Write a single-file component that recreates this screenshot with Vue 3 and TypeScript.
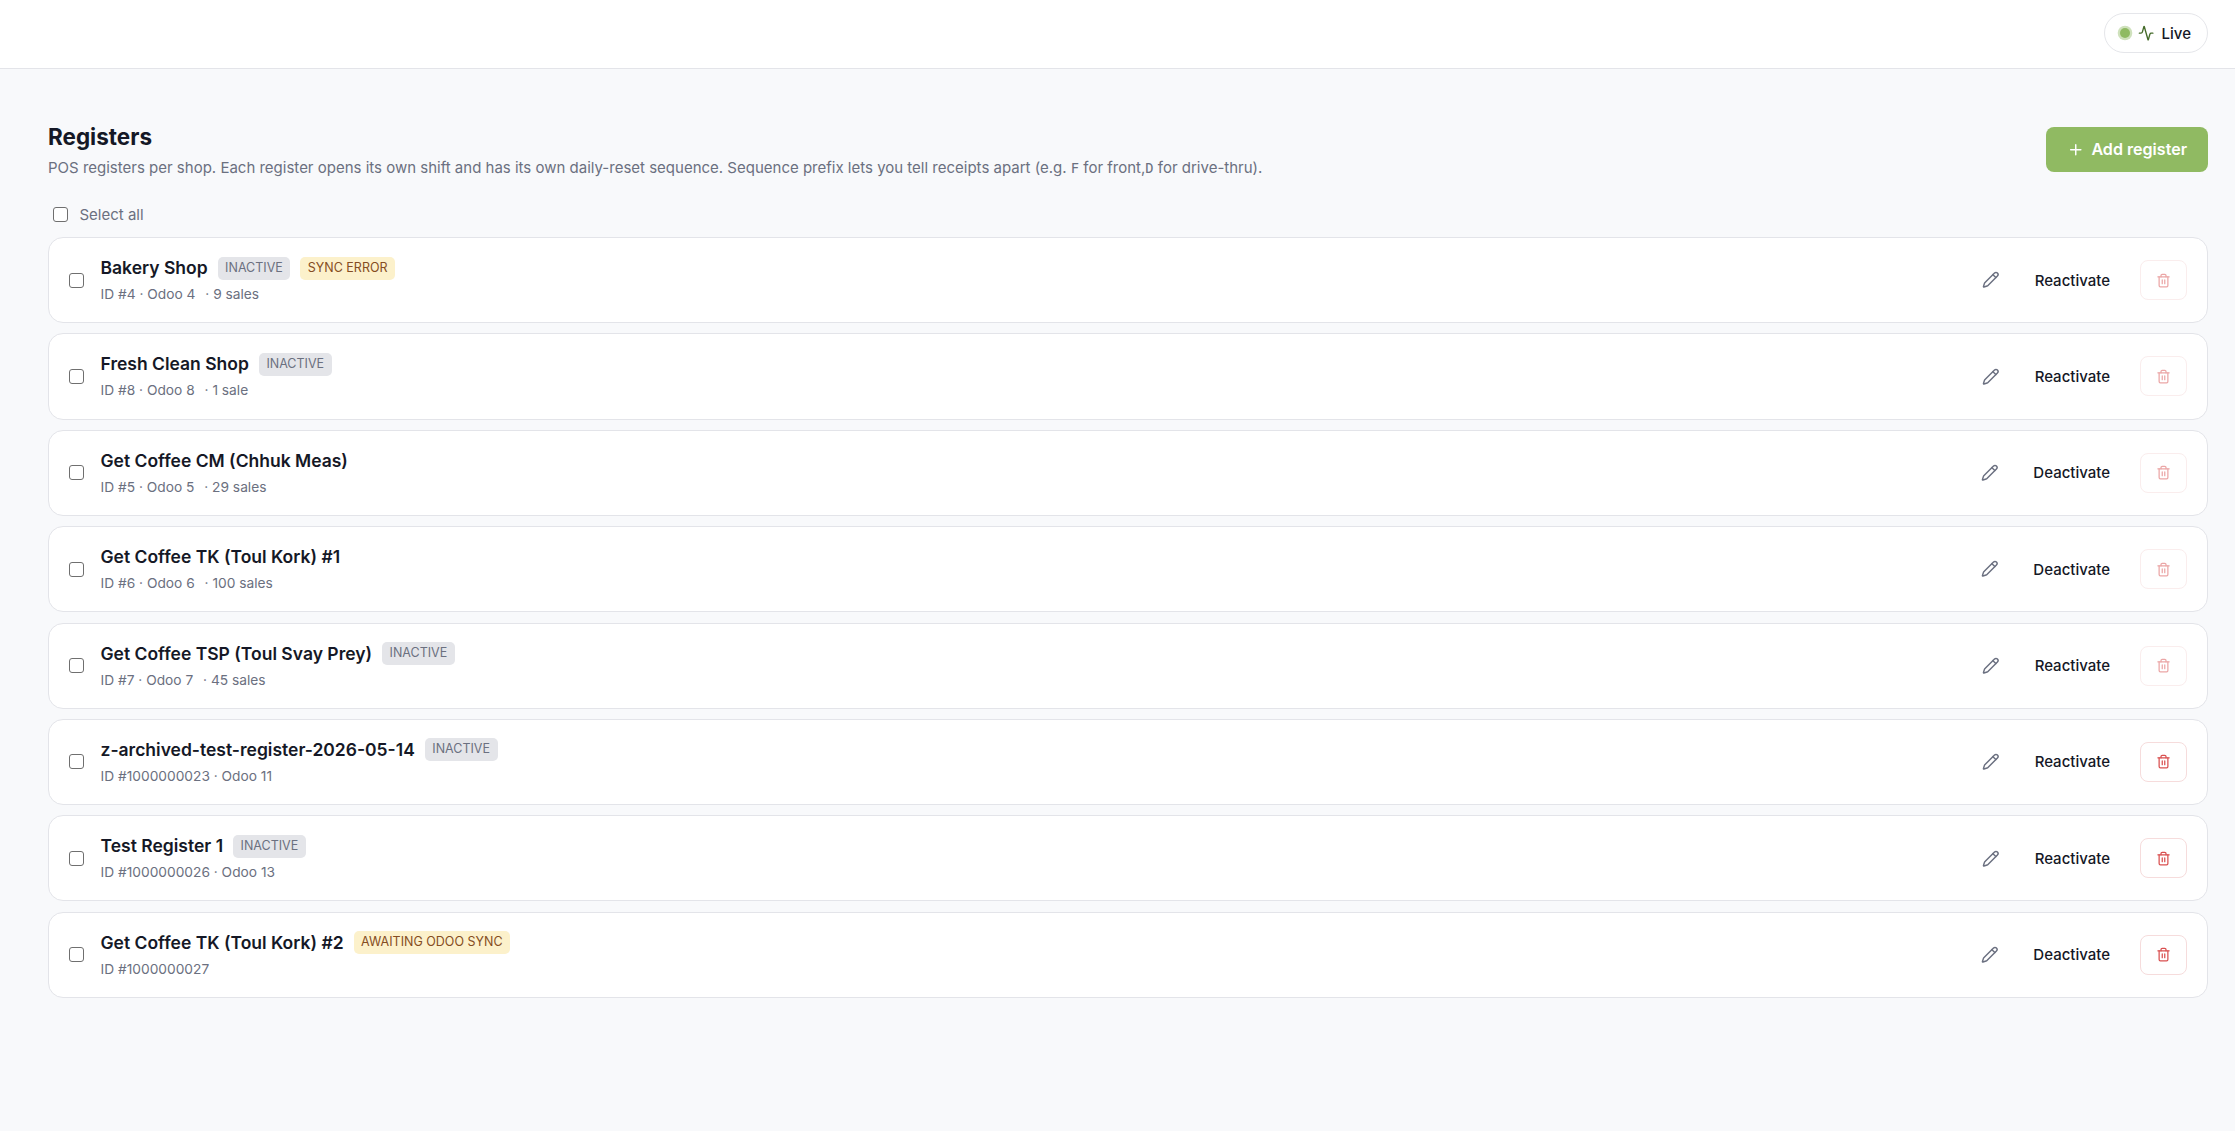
<script setup lang="ts">
interface Badge {
  label: string
  tone: 'muted' | 'warn'
}

interface Register {
  id: number
  name: string
  odoo?: number
  sales?: number
  active: boolean
  badges: Badge[]
}

const inactive: Badge = { label: 'INACTIVE', tone: 'muted' }

const registers: Register[] = [
  { id: 4, name: 'Bakery Shop', odoo: 4, sales: 9, active: false, badges: [inactive, { label: 'SYNC ERROR', tone: 'warn' }] },
  { id: 8, name: 'Fresh Clean Shop', odoo: 8, sales: 1, active: false, badges: [inactive] },
  { id: 5, name: 'Get Coffee CM (Chhuk Meas)', odoo: 5, sales: 29, active: true, badges: [] },
  { id: 6, name: 'Get Coffee TK (Toul Kork) #1', odoo: 6, sales: 100, active: true, badges: [] },
  { id: 7, name: 'Get Coffee TSP (Toul Svay Prey)', odoo: 7, sales: 45, active: false, badges: [inactive] },
  { id: 1000000023, name: 'z-archived-test-register-2026-05-14', odoo: 11, active: false, badges: [inactive] },
  { id: 1000000026, name: 'Test Register 1', odoo: 13, active: false, badges: [inactive] },
  { id: 1000000027, name: 'Get Coffee TK (Toul Kork) #2', active: true, badges: [{ label: 'AWAITING ODOO SYNC', tone: 'warn' }] },
]

const idLine = (r: Register): string => `ID #${r.id}` + (r.odoo ? ` · Odoo ${r.odoo}` : '')
const salesLine = (n: number): string => `· ${n} ${n === 1 ? 'sale' : 'sales'}`
</script>

<template>
  <div class="page">
    <header class="topbar">
      <div class="live">
        <span class="dot"></span>
        <svg class="icon activity" viewBox="0 0 24 24">
          <path d="M22 12h-2.48a2 2 0 0 0-1.93 1.46l-2.35 8.36a.25.25 0 0 1-.48 0L9.24 2.18a.25.25 0 0 0-.48 0l-2.35 8.36A2 2 0 0 1 4.49 12H2" />
        </svg>
        <span>Live</span>
      </div>
    </header>

    <main class="content">
      <div class="heading">
        <div>
          <h1>Registers</h1>
          <p>POS registers per shop. Each register opens its own shift and has its own daily-reset sequence. Sequence prefix lets you tell receipts apart (e.g. <code>F</code> for front,<code>D</code> for drive-thru).</p>
        </div>
        <button class="add" type="button">
          <svg class="icon plus" viewBox="0 0 24 24"><path d="M5 12h14M12 5v14" /></svg>
          <span>Add register</span>
        </button>
      </div>

      <label class="select-all">
        <input type="checkbox" />
        <span>Select all</span>
      </label>

      <ul class="list">
        <li v-for="r in registers" :key="r.id" class="card">
          <input type="checkbox" />
          <div class="info">
            <div class="title">
              <span class="name">{{ r.name }}</span>
              <span v-for="b in r.badges" :key="b.label" class="badge" :class="b.tone">{{ b.label }}</span>
            </div>
            <div class="meta">
              {{ idLine(r) }} <span v-if="r.sales" class="sales">{{ salesLine(r.sales) }}</span>
            </div>
          </div>
          <button class="edit" type="button" aria-label="Edit">
            <svg class="icon pencil" viewBox="0 0 24 24">
              <path d="M21.174 6.812a1 1 0 0 0-3.986-3.987L3.842 16.174a2 2 0 0 0-.5.83l-1.321 4.352a.5.5 0 0 0 .623.622l4.353-1.32a2 2 0 0 0 .83-.497z" />
              <path d="m15 5 4 4" />
            </svg>
          </button>
          <button class="toggle" type="button">{{ r.active ? 'Deactivate' : 'Reactivate' }}</button>
          <button class="delete" type="button" :disabled="!!r.sales" aria-label="Delete">
            <svg class="icon trash" viewBox="0 0 24 24">
              <path d="M3 6h18" />
              <path d="M19 6v14c0 1-1 2-2 2H7c-1 0-2-1-2-2V6" />
              <path d="M8 6V4c0-1 1-2 2-2h4c1 0 2 1 2 2v2" />
              <path d="M10 11v6M14 11v6" />
            </svg>
          </button>
        </li>
      </ul>
    </main>
  </div>
</template>

<style>
body {
  background: #f8f9fb;
}
</style>

<style scoped>
.page {
  min-height: 1131px;
  background: #f8f9fb;
  color: #151826;
  font-family: Inter, "Noto Sans", sans-serif;
  font-size: 15px;
}

.page,
.page * {
  box-sizing: border-box;
}

button {
  font: inherit;
  color: inherit;
  margin: 0;
  padding: 0;
  border: 0;
  background: none;
  display: flex;
  align-items: center;
  justify-content: center;
  flex: none;
}

.icon {
  display: block;
  flex: none;
  fill: none;
  stroke: currentColor;
  stroke-width: 2;
  stroke-linecap: round;
  stroke-linejoin: round;
}

.topbar {
  height: 69px;
  padding: 13px 27px 0 0;
  background: #fff;
  border-bottom: 1px solid #e3e4e9;
  display: flex;
  justify-content: flex-end;
  align-items: flex-start;
}

.live {
  height: 40px;
  padding: 0 16px 0 15px;
  border: 1px solid #e5e6ea;
  border-radius: 20px;
  display: flex;
  align-items: center;
  gap: 7.75px;
  font-weight: 500;
}

.dot {
  width: 10px;
  height: 10px;
  border-radius: 50%;
  background: #8fba62;
  box-shadow: 0 0 0 2.3px #cfe1bc;
}

.activity {
  width: 16.25px;
  height: 16.25px;
  color: #456b2a;
}

.content {
  padding: 51px 27px 0 48px;
}

.heading {
  height: 59px;
  display: flex;
  align-items: center;
  justify-content: space-between;
}

h1 {
  margin: 0 0 4px;
  font-size: 22.5px;
  font-weight: 700;
  line-height: 33px;
}

p {
  margin: 0;
  line-height: 22px;
  color: #6b7080;
}

code {
  font-family: "DejaVu Sans Mono", monospace;
  font-size: 13.75px;
}

.add {
  width: 162px;
  height: 45px;
  gap: 7px;
  border-radius: 8px;
  background: #90ba62;
  color: #fff;
  font-size: 16.1px;
  font-weight: 600;
}

.add span {
  line-height: 20px;
  padding-bottom: 1px;
}

.plus {
  width: 17.5px;
  height: 17.5px;
}

input {
  appearance: none;
  width: 15px;
  height: 15px;
  margin: 0;
  flex: none;
  border: 1px solid #6f6f6f;
  border-radius: 3px;
  background: #fff;
}

.select-all {
  margin-top: 24px;
  height: 23px;
  padding-left: 5px;
  display: flex;
  align-items: center;
  gap: 11.5px;
  color: #6b7080;
}

.list {
  list-style: none;
  margin: 11px 0 0;
  padding: 0;
  display: flex;
  flex-direction: column;
  gap: 10.2px;
}

.card {
  height: 86.2px;
  padding: 0 20px;
  border: 1px solid #e3e4e9;
  border-radius: 15px;
  background: #fff;
  display: flex;
  align-items: center;
}

.info {
  flex: 1;
  margin-left: 16.5px;
}

.title {
  height: 24px;
  margin-bottom: 4px;
  display: flex;
  align-items: center;
  gap: 10px;
}

.name {
  font-size: 17.5px;
  font-weight: 600;
  line-height: 24px;
}

.badge {
  height: 23px;
  padding: 0 7.5px;
  border-radius: 5px;
  font-size: 12.5px;
  line-height: 22px;
}

.muted {
  background: #e4e5e9;
  color: #6b7080;
}

.warn {
  background: #fcf1cb;
  color: #854d22;
}

.meta {
  height: 20px;
  line-height: 20px;
  font-size: 13.75px;
  color: #6b7080;
}

.sales {
  margin-left: 6px;
}

.edit {
  color: #6b7080;
}

.pencil {
  width: 17.5px;
  height: 17.5px;
}

.toggle {
  margin: 0 30px 0 35px;
  font-weight: 500;
}

.delete {
  width: 47px;
  height: 40px;
  border: 1px solid #f6dcdc;
  border-radius: 8px;
  color: #d95050;
}

.delete:disabled {
  opacity: 0.5;
}

.trash {
  width: 15px;
  height: 15px;
}
</style>
